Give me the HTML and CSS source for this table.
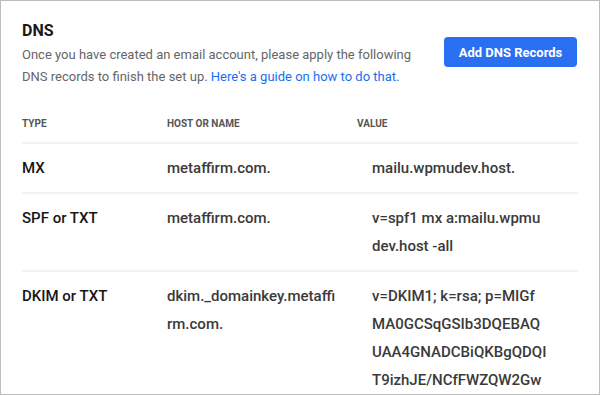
FILE: index.html
```html
<!DOCTYPE html>
<html>
<head>
<meta charset="utf-8">
<link rel="stylesheet" href="styles.css">
</head>
<body>
<div class="frame">
  <div class="top">
    <div class="intro">
      <h2 class="title">DNS</h2>
      <p class="desc">Once you have created an email account, please apply the following DNS records to finish the set up. <a class="link" href="#">Here's a guide on how to do that.</a></p>
    </div>
    <button class="btn">Add DNS Records</button>
  </div>
  <table class="dns">
    <thead>
      <tr>
        <th class="c-type">Type</th>
        <th class="c-host">Host or name</th>
        <th class="c-value">Value</th>
      </tr>
    </thead>
    <tbody>
      <tr>
        <td class="c-type">MX</td>
        <td class="c-host">metaffirm.com.</td>
        <td class="c-value"><span class="val">mailu.wpmudev.host.</span></td>
      </tr>
      <tr>
        <td class="c-type">SPF or TXT</td>
        <td class="c-host">metaffirm.com.</td>
        <td class="c-value"><span class="val">v=spf1 mx a:mailu.wpmudev.host -all</span></td>
      </tr>
      <tr>
        <td class="c-type">DKIM or TXT</td>
        <td class="c-host">dkim._domainkey.metaffirm.com.</td>
        <td class="c-value"><span class="val">v=DKIM1; k=rsa; p=MIGfMA0GCSqGSIb3DQEBAQUAA4GNADCBiQKBgQDQIT9izhJE/NCfFWZQW2Gw</span></td>
      </tr>
    </tbody>
  </table>
</div>
</body>
</html>
```
FILE: styles.css
```css
* { box-sizing: border-box; }
html, body { margin: 0; padding: 0; background: #fff; }
body { font-family: Roboto, "Liberation Sans", sans-serif; }
.frame {
  width: 600px;
  height: 395px;
  border: 1px solid #bdbdbd;
  overflow: hidden;
  padding: 20px 22px 0 21px;
}
.top {
  display: flex;
  align-items: flex-start;
  justify-content: space-between;
}
.intro { width: 405px; }
.title {
  margin: 0;
  font-size: 16px;
  line-height: 20px;
  font-weight: 700;
  color: #1a1a1a;
}
.desc {
  margin: 3px 0 0;
  font-size: 13px;
  line-height: 22px;
  color: #666;
}
.link { color: #1a6ef0; text-decoration: none; font-weight: 400; }
.btn {
  margin-top: 16px;
  width: 133px;
  height: 30px;
  border: none;
  border-radius: 4px;
  background: #2a6ef1;
  color: #fff;
  font-family: Roboto, "Liberation Sans", sans-serif;
  font-size: 13px;
  font-weight: 700;
  padding: 0;
}
.dns {
  width: 556px;
  margin-top: 28px;
  border-collapse: collapse;
  table-layout: fixed;
}
.dns th {
  text-align: left;
  font-size: 10px;
  line-height: 16px;
  font-weight: 700;
  text-transform: uppercase;
  color: #555;
  padding: 0 0 10px;
}
.dns td {
  vertical-align: top;
  border-top: 2px solid #f2f2f2;
  padding: 10px 0;
  font-size: 15px;
  line-height: 28px;
  font-weight: 500;
  color: #3a3a3a;
  word-break: break-all;
}
.dns th.c-type, .dns td.c-type { width: 145px; }
.dns td.c-type { color: #161616; }
.dns th.c-host, .dns td.c-host { width: 190px; padding-right: 18px; }
.dns td.c-value { padding-left: 15px; padding-right: 31px; }
.val { display: block; }
```
